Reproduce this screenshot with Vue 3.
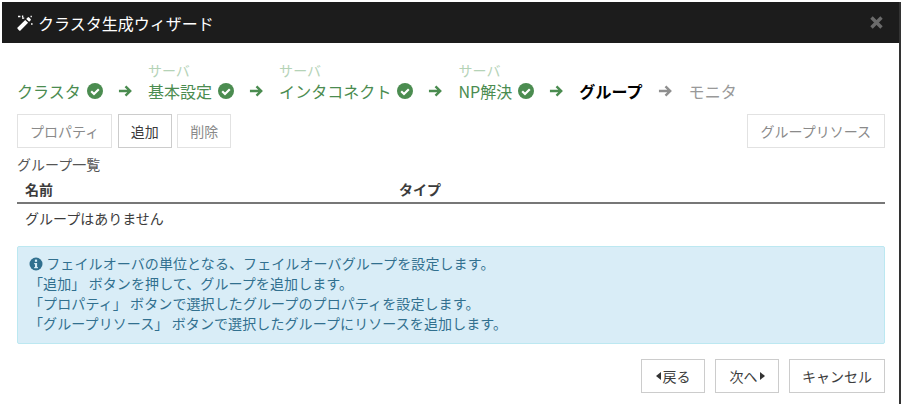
<template>
  <div class="dialog">
    <div class="header">
      <svg class="wand" viewBox="0 0 16 16" width="16" height="16">
        <path d="M.6 12.4 8.2 4.9l2.9 2.9-7.6 7.6a1 1 0 0 1-1.4 0L.6 13.8a1 1 0 0 1 0-1.4z" fill="#fff" />
        <path d="M9.2 3.9l1.5-1.5a1 1 0 0 1 1.4 0l1.5 1.5a1 1 0 0 1 0 1.4l-1.5 1.5z" fill="#fff" />
        <path d="M1 1.5h2.4M5 3.2h2.2M5.6.4v1.8M14 9h1.6M14.2 .8v1.4" stroke="#fff" stroke-width="1.3" fill="none" />
      </svg>
      <span class="title">クラスタ生成ウィザード</span>
      <svg class="close" viewBox="0 0 13 13" width="13" height="13">
        <path d="M1.5 1.5l10 10M11.5 1.5l-10 10" stroke="#6b6b6b" stroke-width="3.4" fill="none" />
      </svg>
    </div>
    <div class="body">
      <div class="steps">
        <template v-for="(step, i) in steps" :key="step.label">
          <div class="step" :class="step.state">
            <div class="sub">{{ step.sub }}</div>
            <div class="label">
              {{ step.label }}
              <svg v-if="step.state === 'done'" class="check" viewBox="0 0 16 16" width="16" height="16">
                <circle cx="8" cy="8" r="8" fill="#4b8c50" />
                <path d="M4.2 8.2 7 11l4.8-4.8" stroke="#fff" stroke-width="2.2" fill="none" />
              </svg>
            </div>
          </div>
          <svg v-if="i < steps.length - 1" class="arrow" :class="{ off: i === 4 }" viewBox="0 0 16 14" width="15" height="14">
            <path d="M1 7h12M8 2l5 5-5 5" stroke="currentColor" stroke-width="2.6" fill="none" />
          </svg>
        </template>
      </div>

      <div class="toolbar">
        <button class="btn disabled">プロパティ</button>
        <button class="btn active">追加</button>
        <button class="btn disabled">削除</button>
        <button class="btn disabled right">グループリソース</button>
      </div>

      <div class="list-title">グループ一覧</div>
      <div class="table-head">
        <div class="col-name">名前</div>
        <div>タイプ</div>
      </div>
      <div class="table-empty">グループはありません</div>

      <div class="info">
        <div class="info-line">
          <svg class="info-icon" viewBox="0 0 14 14" width="14" height="14">
            <circle cx="7" cy="7" r="6.5" fill="#31708f" />
            <rect x="5.9" y="2.6" width="2.2" height="2.2" fill="#d9edf7" />
            <path d="M5.2 6h2.9v4h.8v1.2H5.2V10h.8V7.2h-.8z" fill="#d9edf7" />
          </svg>
          フェイルオーバの単位となる、フェイルオーバグループを設定します。
        </div>
        <div v-for="line in infoLines" :key="line">{{ line }}</div>
      </div>

      <div class="footer">
        <button class="btn wide">
          <span class="tri-left"></span>戻る
        </button>
        <button class="btn wide">
          次へ<span class="tri-right"></span>
        </button>
        <button class="btn">キャンセル</button>
      </div>
    </div>
  </div>
</template>

<script setup>
const steps = [
  { sub: '', label: 'クラスタ', state: 'done' },
  { sub: 'サーバ', label: '基本設定', state: 'done' },
  { sub: 'サーバ', label: 'インタコネクト', state: 'done' },
  { sub: 'サーバ', label: 'NP解決', state: 'done' },
  { sub: '', label: 'グループ', state: 'current' },
  { sub: '', label: 'モニタ', state: 'todo' }
]

const infoLines = [
  '「追加」 ボタンを押して、グループを追加します。',
  '「プロパティ」 ボタンで選択したグループのプロパティを設定します。',
  '「グループリソース」 ボタンで選択したグループにリソースを追加します。'
]
</script>

<style>
html,
body {
  margin: 0;
  background: #fff;
}
</style>

<style scoped>
.dialog {
  width: 899px;
  height: 402px;
  margin: 2px 0 0 2px;
  box-sizing: border-box;
  border-right: 2px solid #333;
  font-family: "Noto Sans CJK JP", "Liberation Sans", sans-serif;
  font-size: 14px;
  color: #3c3c3c;
  background: #fff;
}

.header {
  height: 41px;
  background: #1c1c1c;
  color: #fff;
  display: flex;
  align-items: center;
  padding: 0 16px 0 15px;
}

.wand {
  margin-right: 5px;
}

.title {
  font-size: 16px;
}

.close {
  margin-left: auto;
}

.body {
  padding: 15px 14px 0 15px;
}

.steps {
  display: flex;
  align-items: flex-end;
  height: 44px;
}

.step {
  font-size: 16px;
  line-height: 22px;
  letter-spacing: 0.05px;
}

.sub {
  font-size: 14px;
  line-height: 20px;
  color: #b5d3b7;
}

.label {
  display: flex;
  align-items: center;
  gap: 6px;
}

.done .label {
  color: #4b8c50;
}

.current .label {
  color: #000;
  font-weight: 700;
}

.todo .label {
  color: #999;
}

.arrow {
  color: #4b8c50;
  margin: 0 15px 4px 15px;
}

.arrow.off {
  color: #8f8f8f;
  margin-right: 16px;
}

.toolbar {
  display: flex;
  gap: 5.5px;
  margin-top: 12px;
}

.btn {
  height: 34px;
  padding: 0 12px;
  border: 1px solid #ccc;
  background: #fff;
  color: #3c3c3c;
  font-family: inherit;
  font-size: 14px;
  display: flex;
  align-items: center;
}

.btn.disabled {
  color: #8a8a8a;
  border-color: #e2e2e2;
}

.btn.right {
  margin-left: auto;
  padding: 0 13px;
}

.btn.wide {
  width: 64px;
  padding: 0;
  justify-content: center;
}

.list-title {
  margin-top: 6px;
  line-height: 20px;
  color: #555;
}

.table-head {
  display: flex;
  height: 30px;
  line-height: 24px;
  box-sizing: border-box;
  padding: 3px 0 0 8px;
  border-bottom: 2px solid #777;
  font-weight: 700;
}

.col-name {
  width: 374px;
}

.table-empty {
  padding-left: 8px;
  line-height: 28px;
  height: 29px;
}

.info {
  margin-top: 13px;
  height: 98px;
  box-sizing: border-box;
  padding: 6px 11px;
  background: #d9edf7;
  border: 1px solid #bce8f1;
  border-radius: 2px;
  color: #31708f;
  line-height: 20px;
  letter-spacing: 0.1px;
}

.info-icon {
  vertical-align: -2px;
}

.footer {
  display: flex;
  justify-content: flex-end;
  gap: 10px;
  margin-top: 15px;
}

.tri-left,
.tri-right {
  display: inline-block;
  width: 0;
  height: 0;
  border-top: 4px solid transparent;
  border-bottom: 4px solid transparent;
}

.tri-left {
  border-right: 5px solid #333;
  margin-right: 2px;
}

.tri-right {
  border-left: 5px solid #333;
  margin-left: 2px;
}
</style>
